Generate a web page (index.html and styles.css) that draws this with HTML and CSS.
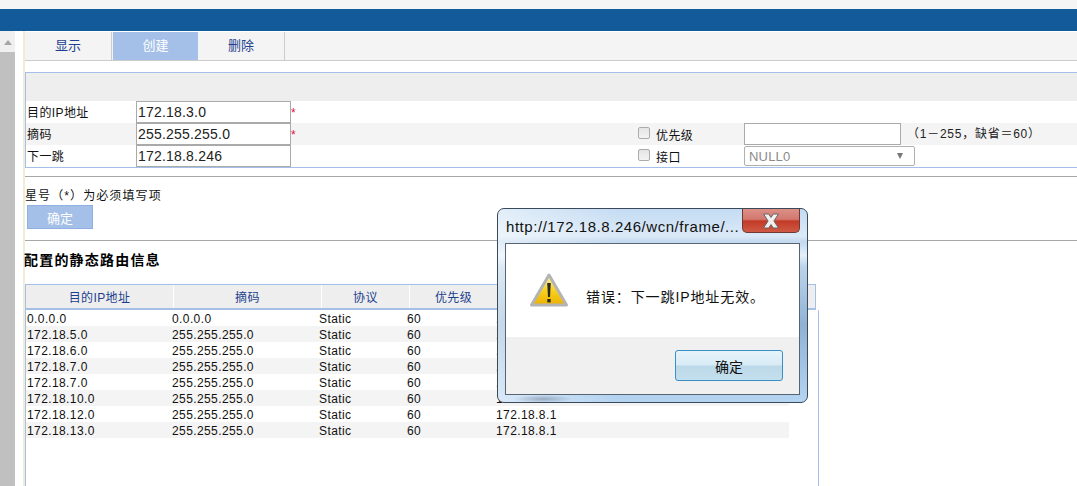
FILE: index.html
```html
<!DOCTYPE html>
<html lang="zh">
<head>
<meta charset="utf-8">
<title>静态路由</title>
<link rel="stylesheet" href="styles.css">
</head>
<body>
<div class="top-gap"></div>
<div class="band"></div>
<div class="layout">
  <div class="scrollbar">
    <div class="scroll-up"><span class="arrow"></span></div>
    <div class="thumb"></div>
  </div>
  <div class="gutter"></div>
  <main class="main">
    <nav class="tabs">
      <a class="tab">显示</a>
      <a class="tab active">创建</a>
      <a class="tab last">删除</a>
    </nav>
    <section class="form-box">
      <div class="form-head"></div>
      <div class="form-row">
        <label class="lbl">目的IP地址</label>
        <input class="field" type="text" value="172.18.3.0">
        <span class="star">*</span>
      </div>
      <div class="form-row shade">
        <label class="lbl">摘码</label>
        <input class="field" type="text" value="255.255.255.0">
        <span class="star">*</span>
        <input class="check" type="checkbox">
        <label class="opt">优先级</label>
        <input class="field wide" type="text">
        <span class="hint">（1－255，缺省＝60）</span>
      </div>
      <div class="form-row">
        <label class="lbl">下一跳</label>
        <input class="field" type="text" value="172.18.8.246">
        <span class="star"></span>
        <input class="check" type="checkbox">
        <label class="opt">接口</label>
        <div class="select"><span>NULL0</span><span class="caret"></span></div>
      </div>
    </section>
    <hr class="rule first">
    <p class="note">星号（*）为必须填写项</p>
    <button class="submit" type="button">确定</button>
    <hr class="rule second">
    <h2 class="title">配置的静态路由信息</h2>
    <div class="thead">
      <div class="th c1">目的IP地址</div>
      <div class="th c2">摘码</div>
      <div class="th c3">协议</div>
      <div class="th c4">优先级</div>
      <div class="th c5"></div>
      <div class="th c6"></div>
    </div>
    <div class="tbody">
      <div class="tr"><span>0.0.0.0</span><span>0.0.0.0</span><span>Static</span><span>60</span><span>172.18.8.1</span></div>
      <div class="tr"><span>172.18.5.0</span><span>255.255.255.0</span><span>Static</span><span>60</span><span>172.18.8.1</span></div>
      <div class="tr"><span>172.18.6.0</span><span>255.255.255.0</span><span>Static</span><span>60</span><span>172.18.8.1</span></div>
      <div class="tr"><span>172.18.7.0</span><span>255.255.255.0</span><span>Static</span><span>60</span><span>172.18.8.1</span></div>
      <div class="tr"><span>172.18.7.0</span><span>255.255.255.0</span><span>Static</span><span>60</span><span>172.18.8.1</span></div>
      <div class="tr"><span>172.18.10.0</span><span>255.255.255.0</span><span>Static</span><span>60</span><span>172.18.8.1</span></div>
      <div class="tr"><span>172.18.12.0</span><span>255.255.255.0</span><span>Static</span><span>60</span><span>172.18.8.1</span></div>
      <div class="tr"><span>172.18.13.0</span><span>255.255.255.0</span><span>Static</span><span>60</span><span>172.18.8.1</span></div>
    </div>
  </main>
</div>

<div class="dialog">
  <div class="dlg-title">http://172.18.8.246/wcn/frame/...</div>
  <div class="dlg-close">
    <svg width="24" height="16" viewBox="0 0 24 16"><path d="M4.5 1h5.2L12 4.4 14.3 1h5.2l-4.6 7 4.6 7h-5.2L12 11.6 9.7 15H4.5l4.6-7z" fill="#f0f0f0" stroke="#6e6262" stroke-width="1"/></svg>
  </div>
  <div class="dlg-inner">
    <div class="dlg-body">
      <svg class="warn" width="40" height="36" viewBox="0 0 40 36">
        <defs>
          <linearGradient id="wy" x1="0" y1="0" x2="0" y2="1">
            <stop offset="0" stop-color="#fff6b8"/>
            <stop offset=".5" stop-color="#f8d320"/>
            <stop offset="1" stop-color="#eeb000"/>
          </linearGradient>
        </defs>
        <path d="M20 3 37.5 33H2.5z" fill="url(#wy)" stroke="#b4b4b4" stroke-width="3" stroke-linejoin="round"/>
        <path d="M18.2 11h3.6l-.8 14h-2z" fill="#2a2a2a"/>
        <rect x="18.3" y="27" width="3.4" height="3.4" fill="#2a2a2a"/>
      </svg>
      <p class="dlg-msg">错误：下一跳IP地址无效。</p>
    </div>
    <div class="dlg-foot">
      <button class="dlg-ok" type="button">确定</button>
    </div>
  </div>
</div>
</body>
</html>
```

FILE: styles.css
```css
* { box-sizing: border-box; }

html, body {
  margin: 0;
  height: 486px;
  overflow: hidden;
  background: #fff;
}

body {
  font-family: "Liberation Sans", "Noto Sans CJK SC", sans-serif;
  font-size: 12px;
  letter-spacing: .4px;
  color: #111;
}

.top-gap { height: 9px; background: #f5f5f5; }
.band { height: 22px; background: #135a9b; }

.layout { display: flex; height: 455px; }

.scrollbar {
  width: 15px;
  background: #f0f0f0;
  display: flex;
  flex-direction: column;
}
.scroll-up {
  height: 21px;
  display: flex;
  justify-content: center;
  padding-top: 9px;
}
.arrow {
  width: 0;
  height: 0;
  border-left: 4px solid transparent;
  border-right: 4px solid transparent;
  border-bottom: 5px solid #a6a6a6;
}
.thumb { flex: 1; background: #c0c0c0; }

.gutter {
  width: 10px;
  background: #fff;
  border-right: 2px solid #f0ecd8;
}

.main { flex: 1; min-width: 0; padding-top: 1px; }

.tabs {
  display: flex;
  height: 29px;
  background: #f4f4f4;
  border-bottom: 1px solid #ccc;
}
.tab {
  width: 87px;
  font-size: 13px;
  letter-spacing: 0;
  line-height: 28px;
  text-align: center;
  color: #1d3f8f;
  border-right: 1px solid #ccc;
}
.tab.active {
  width: 85px;
  margin-left: 1px;
  background: #a4c0e8;
  color: #fff;
  border-right: 0;
}

.form-box {
  margin-top: 11px;
  border-top: 1px solid #a4c0e8;
  border-left: 1px solid #a4c0e8;
  border-bottom: 1px solid #a4c0e8;
}
.form-head { height: 28px; background: #eee; }

.form-row {
  height: 22px;
  display: flex;
  align-items: stretch;
}
.form-row.shade { background: #f4f4f4; }

.lbl {
  width: 110px;
  padding-left: 1px;
  line-height: 24px;
}
.field {
  width: 155px;
  height: 22px;
  margin: 0;
  padding: 0 1px;
  border: 1px solid #aaa;
  background: #fff;
  font: 14px "Liberation Sans", sans-serif;
  letter-spacing: .2px;
  color: #222;
  outline: 0;
}
.field.wide { width: 157px; }
.star {
  width: 347px;
  color: #e8103c;
  line-height: 25px;
}
.check {
  appearance: none;
  width: 12px;
  height: 12px;
  margin: 4px 6px 0 0;
  border: 1px solid #ababab;
  border-radius: 2px;
  background: linear-gradient(#e4e4e4, #f4f4f4);
}
.opt { width: 88px; line-height: 26px; }
.hint {
  margin-left: 6px;
  line-height: 22px;
  letter-spacing: .75px;
  color: #222;
}
.select {
  width: 171px;
  height: 20px;
  margin-top: 1px;
  padding: 0 11px 0 4px;
  display: flex;
  justify-content: space-between;
  align-items: center;
  border: 1px solid #b0b0b0;
  border-radius: 2px;
  font-size: 13px;
  letter-spacing: .2px;
  color: #8a8a8a;
}
.caret {
  width: 0;
  height: 0;
  border-left: 3px solid transparent;
  border-right: 3px solid transparent;
  border-top: 6px solid #777;
}

.rule {
  margin: 0;
  border: 0;
  border-top: 1px solid #a8a8a8;
  height: 1px;
}
.rule.first { margin-top: 8px; }
.rule.second { margin-top: 11px; }

.note {
  margin: 10px 0 0;
  line-height: 18px;
  letter-spacing: 1.1px;
  color: #111;
}
.submit {
  display: block;
  width: 66px;
  height: 24px;
  margin: 0 0 0 2px;
  padding: 0;
  border: 1px solid #8fb0e0;
  background: #a4c0e8;
  color: #fff;
  font: inherit;
  font-size: 13px;
  letter-spacing: 0;
}

.title {
  margin: 9px 0 14px -1px;
  height: 20px;
  font-size: 14px;
  line-height: 20px;
  letter-spacing: 1.2px;
  color: #000;
}

.thead {
  width: 791px;
  height: 26px;
  display: flex;
  background: #eee;
  border: 1px solid #a4c0e8;
  border-bottom-width: 2px;
  color: #1d3f8f;
}
.th {
  line-height: 26px;
  text-align: center;
  border-right: 1px solid #fff;
}
.c1 { width: 148px; }
.c2 { width: 148px; }
.c3 { width: 88px; }
.c4 { width: 88px; }
.c5 { width: 150px; }
.c6 { width: 167px; border-right: 0; }

.tbody {
  width: 794px;
  height: 176px;
  border-left: 1px solid #a4c0e8;
  border-right: 1px solid #a4c0e8;
}
.tr {
  width: 763px;
  height: 16px;
  display: grid;
  grid-template-columns: 145px 147px 88px 89px 1fr;
  padding-left: 1px;
  line-height: 18px;
}
.tr:nth-child(even) { background: #f4f4f4; }

.dialog {
  position: absolute;
  left: 497px;
  top: 208px;
  width: 311px;
  height: 195px;
  padding: 34px 7px 7px;
  border: 1px solid #3b4a5a;
  border-radius: 7px;
  background:
    radial-gradient(ellipse 30px 4px at 45px 190px, rgba(110,125,150,.55), rgba(110,125,150,0)),
    linear-gradient(90deg, rgba(255,255,255,.5), rgba(255,255,255,0) 40%),
    linear-gradient(#c4dcf3 0, #dbe9f7 14%, #c2d9ef 17%, #e4eff9 24%, #bcd4ea 30%, #8fb2d4 60%, #b4d4f2 100%);
}
.dlg-title {
  position: absolute;
  left: 8px;
  top: 8px;
  width: 240px;
  font-size: 15px;
  line-height: 20px;
  letter-spacing: .55px;
  color: #111;
  white-space: nowrap;
}
.dlg-close {
  position: absolute;
  left: 244px;
  top: 0;
  width: 58px;
  height: 24px;
  display: flex;
  justify-content: center;
  align-items: center;
  border: 1px solid #6f3a34;
  border-top: 0;
  border-radius: 0 0 5px 5px;
  background: linear-gradient(#dc9087 0, #d2786e 45%, #c23a26 52%, #cf5a45 100%);
}
.dlg-inner {
  height: 152px;
  border: 1px solid #566473;
  background: #fff;
  display: flex;
  flex-direction: column;
}
.dlg-body {
  height: 93px;
  padding: 28px 0 0 23px;
  display: flex;
  align-items: flex-start;
}
.dlg-msg {
  margin: 15px 0 0 17px;
  font-size: 14px;
  line-height: 20px;
  letter-spacing: .9px;
  color: #111;
}
.dlg-foot {
  flex: 1;
  background: #f0f0f0;
  display: flex;
  justify-content: flex-end;
  align-items: flex-start;
  padding: 13px 16px 0 0;
}
.dlg-ok {
  width: 108px;
  height: 31px;
  padding: 0;
  border: 1px solid #3c8fc4;
  border-radius: 3px;
  background: linear-gradient(#e6f3fa 0, #d8ebf5 48%, #bcd9e9 52%, #c4dfed 100%);
  font: 14px "Liberation Sans", "Noto Sans CJK SC", sans-serif;
  color: #111;
}
```
